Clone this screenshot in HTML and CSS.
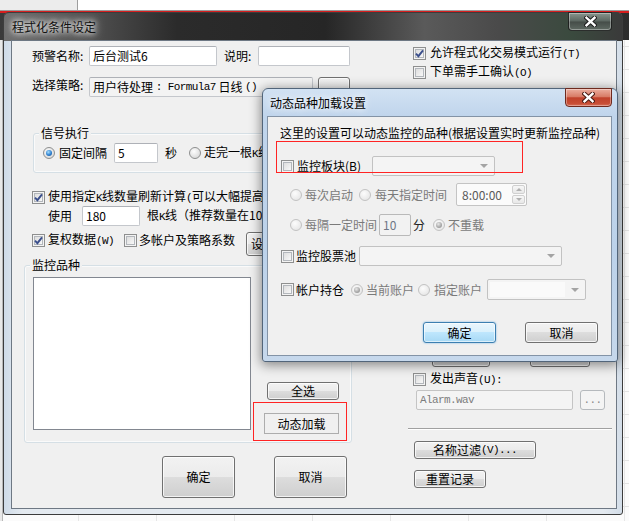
FILE: index.html
```html
<!DOCTYPE html>
<html lang="zh-CN">
<head>
<meta charset="utf-8">
<title>程式化条件设定</title>
<link rel="stylesheet" href="styles.css">
</head>
<body>
<div class="desk">
  <div class="bg-top"><div class="bg-top-win"></div></div>
  <div class="bg-red"></div>
  <div class="bg-dark"></div>
  <div class="bg-left"></div>

  <div class="win main">
    <div class="tbar">
      <span class="wtitle">程式化条件设定</span>
      <span class="xbtn xbtn-idle"><svg width="13" height="11" viewBox="0 0 13 11"><path d="M2.5 1.8 L10.5 9.2 M10.5 1.8 L2.5 9.2" stroke="#1e1e1e" stroke-width="4.4" stroke-linecap="square"/><path d="M2.5 1.8 L10.5 9.2 M10.5 1.8 L2.5 9.2" stroke="#fff" stroke-width="2.4" stroke-linecap="square"/></svg></span>
    </div>
    <div class="client">
      <div class="lc">
        <div class="row r-name">
          <span class="lbl l-name">预警名称:</span>
          <span class="tb tb-name">后台测试6</span>
          <span class="lbl l-desc">说明:</span>
          <span class="tb tb-desc"></span>
        </div>
        <div class="row r-strat">
          <span class="lbl l-name">选择策略:</span>
          <span class="tb tb-strat">用户待处理 <span class="lat">: Formula7</span> 日线 <span class="lat">()</span></span>
          <span class="btn b-strat"></span>
        </div>
        <div class="grp g-signal">
          <span class="legend">信号执行</span>
          <div class="row r-signal">
            <span class="rd on"></span>
            <span class="lbl l-fix">固定间隔</span>
            <span class="tb tb-sec">5</span>
            <span class="lbl l-s">秒</span>
            <span class="rd rd-bar"></span>
            <span class="lbl l-bar">走完一根<span class="lat">K</span>线</span>
          </div>
        </div>
        <div class="row r-chk1">
          <span class="cb on"><svg width="11" height="11" viewBox="0 0 11 11"><path d="M2 5.6 L4.4 8.2 L9 2.4" fill="none" stroke="#3b4f8c" stroke-width="1.9"/></svg></span>
          <span class="lbl l-chk">使用指定<span class="lat">K</span>线数量刷新计算<span class="lat">(</span>可以大幅提高</span>
        </div>
        <div class="row r-use">
          <span class="lbl l-use">使用</span>
          <span class="tb tb-180">180</span>
          <span class="lbl l-k">根<span class="lat">K</span>线（推荐数量在10</span>
        </div>
        <div class="row r-chk2">
          <span class="cb on"><svg width="11" height="11" viewBox="0 0 11 11"><path d="M2 5.6 L4.4 8.2 L9 2.4" fill="none" stroke="#3b4f8c" stroke-width="1.9"/></svg></span>
          <span class="lbl l-fq">复权数据<span class="lat">(W)</span></span>
          <span class="cb cb-multi"></span>
          <span class="lbl l-multi">多帐户及策略系数</span>
          <span class="btn b-set"><span class="b-set-t">设</span></span>
        </div>
        <div class="grp g-list">
          <span class="legend">监控品种</span>
          <div class="list-wrap">
            <div class="listbox"></div>
            <div class="list-btns">
              <span class="btn b-all">全选</span>
              <span class="btn-flat b-dyn">动态加载</span>
            </div>
          </div>
          <div class="mark mark-dyn"></div>
        </div>
        <div class="row r-ok">
          <span class="btn b-big">确定</span>
          <span class="btn b-big b-cancel">取消</span>
        </div>
      </div>

      <div class="rc">
        <div class="row r-rc1">
          <span class="cb on"><svg width="11" height="11" viewBox="0 0 11 11"><path d="M2 5.6 L4.4 8.2 L9 2.4" fill="none" stroke="#3b4f8c" stroke-width="1.9"/></svg></span>
          <span class="lbl l-rc">允许程式化交易模式运行<span class="lat">(T)</span></span>
        </div>
        <div class="row r-rc2">
          <span class="cb"></span>
          <span class="lbl l-rc">下单需手工确认<span class="lat">(O)</span></span>
        </div>
        <div class="row r-hidden">
          <span class="btn b-h1"></span>
          <span class="btn b-h2"></span>
        </div>
        <div class="row r-sound">
          <span class="cb"></span>
          <span class="lbl l-rc">发出声音<span class="lat">(U):</span></span>
        </div>
        <div class="row r-alarm">
          <span class="tb tb-alarm"><span class="lat">Alarm.wav</span></span>
          <span class="btn-dis b-dots"><span class="lat">...</span></span>
        </div>
        <div class="sep"></div>
        <div class="row r-filter">
          <span class="btn b-filter">名称过滤<span class="lat">(V)...</span></span>
        </div>
        <div class="row r-reset">
          <span class="btn b-reset">重置记录</span>
        </div>
      </div>
    </div>
  </div>

  <div class="win sub">
    <div class="tbar sub-tbar">
      <span class="wtitle sub-title">动态品种加载设置</span>
      <span class="xbtn xbtn-red"><svg width="13" height="11" viewBox="0 0 13 11"><path d="M2.5 1.8 L10.5 9.2 M10.5 1.8 L2.5 9.2" stroke="#4a1a12" stroke-width="4.4" stroke-linecap="square"/><path d="M2.5 1.8 L10.5 9.2 M10.5 1.8 L2.5 9.2" stroke="#fff" stroke-width="2.4" stroke-linecap="square"/></svg></span>
    </div>
    <div class="sclient">
      <div class="s-desc">这里的设置可以动态监控的品种(根据设置实时更新监控品种)</div>
      <div class="row s-board">
        <span class="cb"></span>
        <span class="lbl sl-board">监控板块(B)</span>
        <span class="cmb cmb-board"><span class="arr"></span></span>
      </div>
      <div class="row s-r1">
        <span class="rd dis"></span>
        <span class="lbl dim sl-r">每次启动</span>
        <span class="rd dis rd-daily"></span>
        <span class="lbl dim sl-daily">每天指定时间</span>
        <span class="spin">
          <span class="spin-val">8:00:00</span>
          <span class="spin-btns"><span class="sp sp-up"><i></i></span><span class="sp sp-dn"><i></i></span></span>
        </span>
      </div>
      <div class="row s-r2">
        <span class="rd dis"></span>
        <span class="lbl dim sl-r">每隔一定时间</span>
        <span class="tb tb-10">10</span>
        <span class="lbl sl-min">分</span>
        <span class="rd dis on rd-no"></span>
        <span class="lbl dim sl-no">不重载</span>
      </div>
      <div class="row s-pool">
        <span class="cb"></span>
        <span class="lbl sl-pool">监控股票池</span>
        <span class="cmb cmb-pool"><span class="arr"></span></span>
      </div>
      <div class="row s-acct">
        <span class="cb"></span>
        <span class="lbl sl-pool">帐户持仓</span>
        <span class="rd dis on rd-cur"></span>
        <span class="lbl dim sl-cur">当前账户</span>
        <span class="rd dis rd-spec"></span>
        <span class="lbl dim sl-spec">指定账户</span>
        <span class="cmb cmb-acct"><span class="cmb-in"></span><span class="arr"></span></span>
      </div>
      <div class="row s-btns">
        <span class="btn btn-def s-ok">确定</span>
        <span class="btn s-cancel">取消</span>
      </div>
      <div class="mark mark-board"></div>
    </div>
  </div>
</div>
</body>
</html>
```

FILE: styles.css
```css
* { box-sizing: border-box; }
html, body { margin: 0; padding: 0; }
body {
  width: 629px;
  height: 521px;
  overflow: hidden;
  font-family: "Noto Sans CJK SC", "Noto Sans", sans-serif;
  font-size: 12px;
  color: #000;
}
.desk {
  position: relative;
  width: 629px;
  height: 521px;
  overflow: hidden;
  background-color: #fbfbfb;
  background-image: linear-gradient(#e3e3e3 1px, transparent 1px), linear-gradient(90deg, #e6e6e6 1px, transparent 1px);
  background-size: 100% 23px, 78px 100%;
}
.bg-top { position: absolute; left: 0; top: 0; width: 629px; height: 11px; background: #ececec; border-bottom: 1px solid #9a9a9a; }
.bg-top-win { position: absolute; left: 77px; top: 0; right: 0; height: 10px; background: #fff; border-left: 1px solid #9d9d9d; }
.bg-red { position: absolute; left: 0; top: 11px; width: 629px; height: 2px; background: #d81e1e; }
.bg-dark { position: absolute; left: 0; top: 13px; width: 629px; height: 27px; background: linear-gradient(90deg, #3a3a3a, #262626 40%, #4a4a4a 70%, #2d2d2d); }
.bg-left { position: absolute; left: 0; top: 40px; width: 3px; height: 481px; background: #e8e8e8; border-right: 1px solid #b8b8b8; }

.lat { font-family: "Liberation Mono", "DejaVu Sans Mono", monospace; font-size: 11px; letter-spacing: -0.6px; }

/* windows */
.win { position: absolute; display: flex; flex-direction: column; }
.main {
  left: 3px; top: 12px; width: 620px; height: 503px;
  border: 1px solid #3c3c3c;
  border-radius: 6px 6px 3px 3px;
  padding: 0 5px 5px 7px;
  background:
    linear-gradient(90deg, #6e6e6e 0, #505050 14%, #2b2b2b 28%, #262626 52%, #5a5a5a 68%, #4a4a4a 80%, #3a4a3e 92%, #3a3a3a 100%) top left / 100% 28px no-repeat,
    linear-gradient(90deg, #cfdbe8, #e4eaf0 3%, #e4eaf0 97%, #d3dde8);
}
.tbar { height: 27px; display: flex; justify-content: space-between; align-items: flex-start; flex-shrink: 0; }
.wtitle { margin-left: 1px; line-height: 27px; font-size: 12px; color: #111; text-shadow: 0 0 5px #fff, 0 0 9px rgba(255,255,255,.9), 0 0 12px rgba(255,255,255,.7); }
.xbtn { width: 44px; height: 19px; margin-top: -1px; margin-right: 5px; display: flex; align-items: center; justify-content: center; border-radius: 0 0 4px 4px; }
.xbtn-idle {
  border: 1px solid rgba(20,20,20,.8);
  background: linear-gradient(#8a968e, #5b6660 48%, #454d48 52%, #5e6962);
  box-shadow: inset 0 0 0 1px rgba(255,255,255,.35);
}
.client {
  flex: 1;
  display: flex;
  border: 1px solid #6e7884;
  background: #f0f0f0;
}

/* shared rows */
.row { display: flex; align-items: center; flex-shrink: 0; white-space: nowrap; }
.lbl { flex-shrink: 0; line-height: 16px; white-space: nowrap; }
.dim { color: #7a7a7a; }

/* controls */
.tb {
  display: flex; align-items: center; flex-shrink: 0;
  height: 20px; padding: 0 3px;
  background: #fff;
  border: 1px solid #c4c7cc; border-top-color: #aeb1b7;
  border-radius: 2px;
  line-height: 16px; overflow: hidden;
}
.btn {
  display: flex; align-items: center; justify-content: center; flex-shrink: 0;
  border: 1px solid #707070; border-radius: 3px;
  background: linear-gradient(#f2f2f2 0%, #ebebeb 50%, #dddddd 50%, #cfcfcf 100%);
  box-shadow: inset 0 0 0 1px rgba(255,255,255,.75);
  line-height: 14px;
}
.btn-def {
  border-color: #3c7fb1;
  background: linear-gradient(#eaf6fd 0%, #d9f0fc 50%, #bee6fd 50%, #a7d9f5 100%);
  box-shadow: inset 0 0 0 1px rgba(255,255,255,.6), 0 0 2px #6fb0e0;
}
.btn-flat { display: flex; align-items: center; justify-content: center; flex-shrink: 0; border: 1px solid #adadad; background: #f0f0f0; }
.btn-dis { display: flex; align-items: center; justify-content: center; flex-shrink: 0; border: 1px solid #b5b9bd; border-radius: 3px; background: #f4f4f4; color: #8a8a8a; }
.cb {
  position: relative; flex-shrink: 0;
  width: 13px; height: 13px;
  border: 1px solid #8e8f8f;
  background: linear-gradient(135deg, #d6d6d6, #f7f7f7 80%);
  box-shadow: inset 0 0 0 1px #f3f3f3, inset 0 0 0 2px #b3b7bc;
}
.cb svg { position: absolute; left: 0; top: 0; }
.rd {
  position: relative; flex-shrink: 0;
  width: 12px; height: 12px; border-radius: 50%;
  border: 1px solid #8e8f8f;
  background: radial-gradient(circle at 40% 35%, #fdfdfd, #d9d9d9 80%);
}
.rd.on::after {
  content: ""; position: absolute; left: 2px; top: 2px; width: 6px; height: 6px; border-radius: 50%;
  background: radial-gradient(circle at 40% 35%, #a8e0ff, #2d7fcf 55%, #16498a);
}
.rd.dis { border-color: #c2c2c2; background: radial-gradient(circle at 40% 35%, #fcfcfc, #e6e6e6 80%); }
.rd.dis.on::after { background: radial-gradient(circle at 40% 35%, #e8e8e8, #a6a6a6 60%, #8a8a8a); }
.cmb {
  display: flex; align-items: center; justify-content: flex-end; flex-shrink: 0;
  height: 20px; border: 1px solid #c2c2c2; border-radius: 2px; background: #f4f4f4;
}
.arr { width: 0; height: 0; margin-right: 6px; border-left: 4px solid transparent; border-right: 4px solid transparent; border-top: 4px solid #a4a4a4; }

.grp { position: relative; flex-shrink: 0; border: 1px solid #d5dfe5; border-radius: 3px; box-shadow: inset 0 0 0 1px #fafafa; }
.legend { position: absolute; top: -9px; left: 5px; padding: 0 2px; background: #f0f0f0; line-height: 16px; }
.mark { position: absolute; border: 1px solid #ff2424; }

/* left column */
.lc { width: 340px; flex-shrink: 0; padding-top: 5px; display: flex; flex-direction: column; overflow: hidden; }
.r-name { height: 20px; }
.l-name { margin-left: 20px; width: 57px; }
.tb-name { width: 128px; }
.l-desc { margin-left: 7px; width: 34px; }
.tb-desc { width: 92px; }
.r-strat { height: 20px; margin-top: 11px; align-items: flex-start; }
.tb-strat { width: 224px; background: #f3f3f3; white-space: pre; }
.b-strat { margin-left: 5px; width: 32px; height: 22px; }
.g-signal { margin-top: 36px; margin-left: 21px; width: 319px; height: 40px; }
.r-signal { padding-top: 9px; padding-left: 9px; height: 29px; }
.l-fix { margin-left: 4px; }
.tb-sec { margin-left: 7px; width: 44px; }
.l-s { margin-left: 7px; }
.rd-bar { margin-left: 12px; }
.l-bar { margin-left: 3px; }
.r-chk1 { margin-top: 16px; height: 16px; padding-left: 20px; }
.l-chk { margin-left: 3px; }
.r-use { margin-top: 1px; height: 20px; }
.l-use { margin-left: 36px; width: 24px; }
.tb-180 { margin-left: 10px; width: 58px; }
.l-k { margin-left: 7px; }
.r-chk2 { margin-top: 6px; height: 16px; padding-left: 20px; overflow: visible; }
.l-fq { margin-left: 3px; width: 76px; }
.l-multi { margin-left: 2px; }
.b-set { margin-left: 11px; width: 34px; height: 24px; margin-top: 7px; justify-content: flex-start; padding-left: 4px; }
.g-list { margin-top: 17px; margin-left: 12px; width: 328px; height: 178px; }
.list-wrap { display: flex; padding: 11px 0 0 8px; }
.listbox { width: 218px; height: 153px; background: #fff; border: 1px solid #828790; flex-shrink: 0; }
.list-btns { display: flex; flex-direction: column; margin-left: 13px; }
.b-all { margin-left: 3px; margin-top: 105px; width: 72px; height: 18px; }
.b-dyn { margin-top: 13px; width: 75px; height: 21px; }
.mark-dyn { left: 228px; top: 136px; width: 94px; height: 39px; }
.r-ok { margin-top: 13px; height: 42px; }
.b-big { margin-left: 150px; width: 73px; height: 42px; }
.b-cancel { margin-left: 39px; }

/* right column */
.rc { flex: 1; padding-top: 4px; display: flex; flex-direction: column; }
.r-rc1, .r-rc2, .r-sound { height: 16px; padding-left: 61px; }
.r-rc2 { margin-top: 3px; }
.l-rc { margin-left: 4px; }
.r-hidden { margin-top: 265px; height: 22px; }
.b-h1 { margin-left: 80px; width: 58px; height: 22px; }
.b-h2 { margin-left: 40px; width: 60px; height: 22px; }
.r-sound { margin-top: 4px; }
.r-alarm { margin-top: 3px; height: 20px; }
.tb-alarm { margin-left: 64px; width: 157px; background: #f4f4f4; color: #7c7c7c; border-color: #c4c4c4; }
.b-dots { margin-left: 7px; width: 25px; height: 20px; }
.sep { margin-top: 18px; margin-left: 56px; width: 204px; height: 2px; border-top: 1px solid #a0a0a0; border-bottom: 1px solid #fff; flex-shrink: 0; }
.r-filter { margin-top: 11px; height: 18px; }
.b-filter { margin-left: 62px; width: 122px; height: 18px; }
.r-reset { margin-top: 11px; height: 18px; }
.b-reset { margin-left: 62px; width: 72px; height: 18px; }

/* sub dialog */
.sub {
  left: 262px; top: 88px; width: 356px; height: 274px;
  border: 1px solid #52657a;
  border-radius: 6px 6px 3px 3px;
  padding: 0 5px 5px 4px;
  background: linear-gradient(#d2e2f3 0, #c0d5ec 27px, #bcd2ea 60%, #c6d8ec 100%);
  box-shadow: 0 2px 12px 1px rgba(0,0,0,.45);
}
.sub-title { margin-left: 3px; color: #000; text-shadow: 0 0 6px rgba(255,255,255,.9), 0 0 10px rgba(255,255,255,.8); }
.xbtn-red {
  width: 47px; margin-right: 0;
  border: 1px solid #6e2a1f;
  background: linear-gradient(#ebae9f 0%, #d87b66 45%, #c0412b 52%, #c84e36 85%, #d7705a 100%);
  box-shadow: inset 0 0 0 1px rgba(255,255,255,.35);
}
.sclient {
  position: relative; flex: 1;
  border: 1px solid #8393a6;
  background: #f0f0f0;
  padding-top: 8px;
  display: flex; flex-direction: column;
}
.s-desc { margin-left: 12px; height: 16px; line-height: 16px; white-space: nowrap; }
.s-board { margin-top: 15px; height: 20px; padding-left: 13px; }
.sl-board { margin-left: 3px; width: 75px; }
.cmb-board { width: 123px; }
.s-r1 { margin-top: 7px; height: 23px; padding-left: 22px; }
.sl-r { margin-left: 3px; }
.rd-daily { margin-left: 6px; }
.sl-daily { margin-left: 4px; }
.spin { display: flex; align-items: center; justify-content: space-between; margin-left: 9px; width: 71px; height: 23px; border: 1px solid #c4c4c4; border-radius: 2px; background: #fbfbfb; padding: 1px 1px 1px 5px; flex-shrink: 0; }
.spin-val { color: #5a5a5a; line-height: 16px; }
.spin-btns { display: flex; flex-direction: column; gap: 1px; width: 13px; height: 19px; }
.sp { flex: 1; display: flex; align-items: center; justify-content: center; border: 1px solid #d0d0d0; border-radius: 2px; background: linear-gradient(#f7f7f7, #e8e8e8); }
.sp i { width: 0; height: 0; border-left: 3px solid transparent; border-right: 3px solid transparent; }
.sp-up i { border-bottom: 3px solid #b0b0b0; }
.sp-dn i { border-top: 3px solid #b0b0b0; }
.s-r2 { margin-top: 8px; height: 22px; padding-left: 22px; }
.tb-10 { margin-left: 2px; width: 32px; height: 22px; background: #f2f2f2; color: #6f7786; border-color: #b9b9b9; }
.sl-min { margin-left: 2px; color: #222; }
.rd-no { margin-left: 8px; }
.sl-no { margin-left: 3px; }
.s-pool { margin-top: 10px; height: 20px; padding-left: 13px; }
.sl-pool { margin-left: 2px; }
.cmb-pool { margin-left: 3px; width: 203px; }
.s-acct { margin-top: 13px; height: 21px; padding-left: 13px; }
.rd-cur { margin-left: 7px; }
.sl-cur { margin-left: 3px; }
.rd-spec { margin-left: 4px; }
.sl-spec { margin-left: 4px; }
.cmb-acct { margin-left: 5px; width: 99px; height: 21px; padding: 2px 0 2px 2px; }
.cmb-in { flex: 1; align-self: stretch; background: #fafafa; margin-right: 6px; }
.s-btns { margin-top: 22px; height: 21px; }
.s-ok { margin-left: 155px; width: 73px; height: 21px; }
.s-cancel { margin-left: 29px; width: 73px; height: 21px; }
.mark-board { left: 8px; top: 24px; width: 247px; height: 32px; }
```
